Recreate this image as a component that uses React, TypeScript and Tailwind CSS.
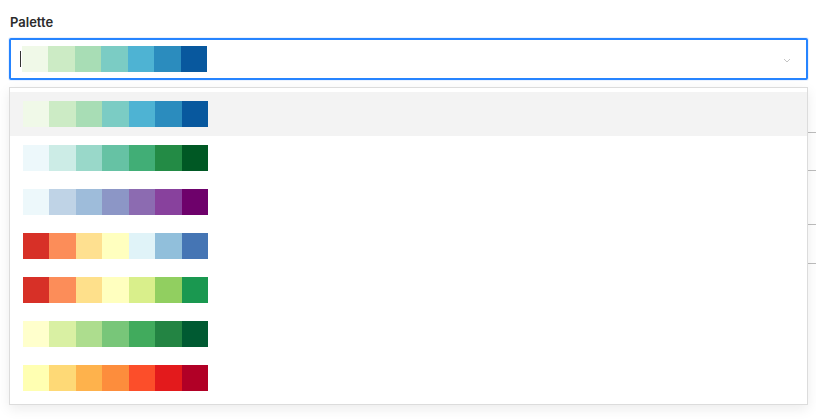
import React, { useState } from 'react';

// ColorBrewer palettes, 7 classes each
const PALETTES: string[][] = [
  ['#f0f9e8', '#ccebc5', '#a8ddb5', '#7bccc4', '#4eb3d3', '#2b8cbe', '#08589e'],
  ['#edf8fb', '#ccece6', '#99d8c9', '#66c2a4', '#41ae76', '#238b45', '#005824'],
  ['#edf8fb', '#bfd3e6', '#9ebcda', '#8c96c6', '#8c6bb1', '#88419d', '#6e016b'],
  ['#d73027', '#fc8d59', '#fee090', '#ffffbf', '#e0f3f8', '#91bfdb', '#4575b4'],
  ['#d73027', '#fc8d59', '#fee08b', '#ffffbf', '#d9ef8b', '#91cf60', '#1a9850'],
  ['#ffffcc', '#d9f0a3', '#addd8e', '#78c679', '#41ab5d', '#238443', '#005a32'],
  ['#ffffb2', '#fed976', '#feb24c', '#fd8d3c', '#fc4e2a', '#e31a1c', '#b10026'],
];

function Swatches({ colors }: { colors: string[] }) {
  return (
    <div className="flex w-[185px] h-[26px]">
      {colors.map((c, i) => (
        <div key={i} className="flex-1 h-full" style={{ backgroundColor: c }} />
      ))}
    </div>
  );
}

export default function App() {
  const [selected, setSelected] = useState(0);
  const [hovered, setHovered] = useState(0);

  return (
    <div
      className="relative w-[816px] h-[420px] overflow-hidden bg-white px-[9px] pt-[12px]"
      style={{ fontFamily: 'Inter, "Noto Sans", sans-serif' }}
    >
      <div className="ml-[1px] h-[20px] text-[13px] leading-[20px] font-semibold text-[#2b2b2b]">Palette</div>

      <div className="mt-[6px] flex h-[42px] w-[799px] items-center rounded-[2px] border-2 border-[#2684ff] pl-[9px] pr-[14px] shadow-[0_0_0_1px_#eaf2ff]">
        <div className="mr-[1px] h-[16px] w-[1px] bg-[#333]" />
        <Swatches colors={PALETTES[selected]} />
        <div className="flex-1" />
        <svg width="8" height="5" viewBox="0 0 8 5" className="mr-[1px] mt-[2px]">
          <path d="M1 1 L4 4 L7 1" fill="none" stroke="#c4c4c4" strokeWidth="1" />
        </svg>
      </div>

      {/* form rows underneath the open menu */}
      <div className="mt-[52px] h-[39px] w-[830px] border-y border-[#bdbdbd]" />
      <div className="mt-[53px] h-[40px] w-[830px] border-y border-[#bdbdbd]" />

      <div className="absolute left-[9px] top-[87px] w-[799px] border border-[#dcdcdc] bg-white py-[4px] shadow-[0_4px_12px_rgba(0,0,0,0.08)]">
        {PALETTES.map((p, i) => (
          <div
            key={i}
            onMouseEnter={() => setHovered(i)}
            onClick={() => setSelected(i)}
            className={`flex h-[44px] cursor-pointer items-center pl-[13px] ${hovered === i ? 'bg-[#f3f3f3]' : 'bg-white'}`}
          >
            <Swatches colors={p} />
          </div>
        ))}
      </div>
    </div>
  );
}
